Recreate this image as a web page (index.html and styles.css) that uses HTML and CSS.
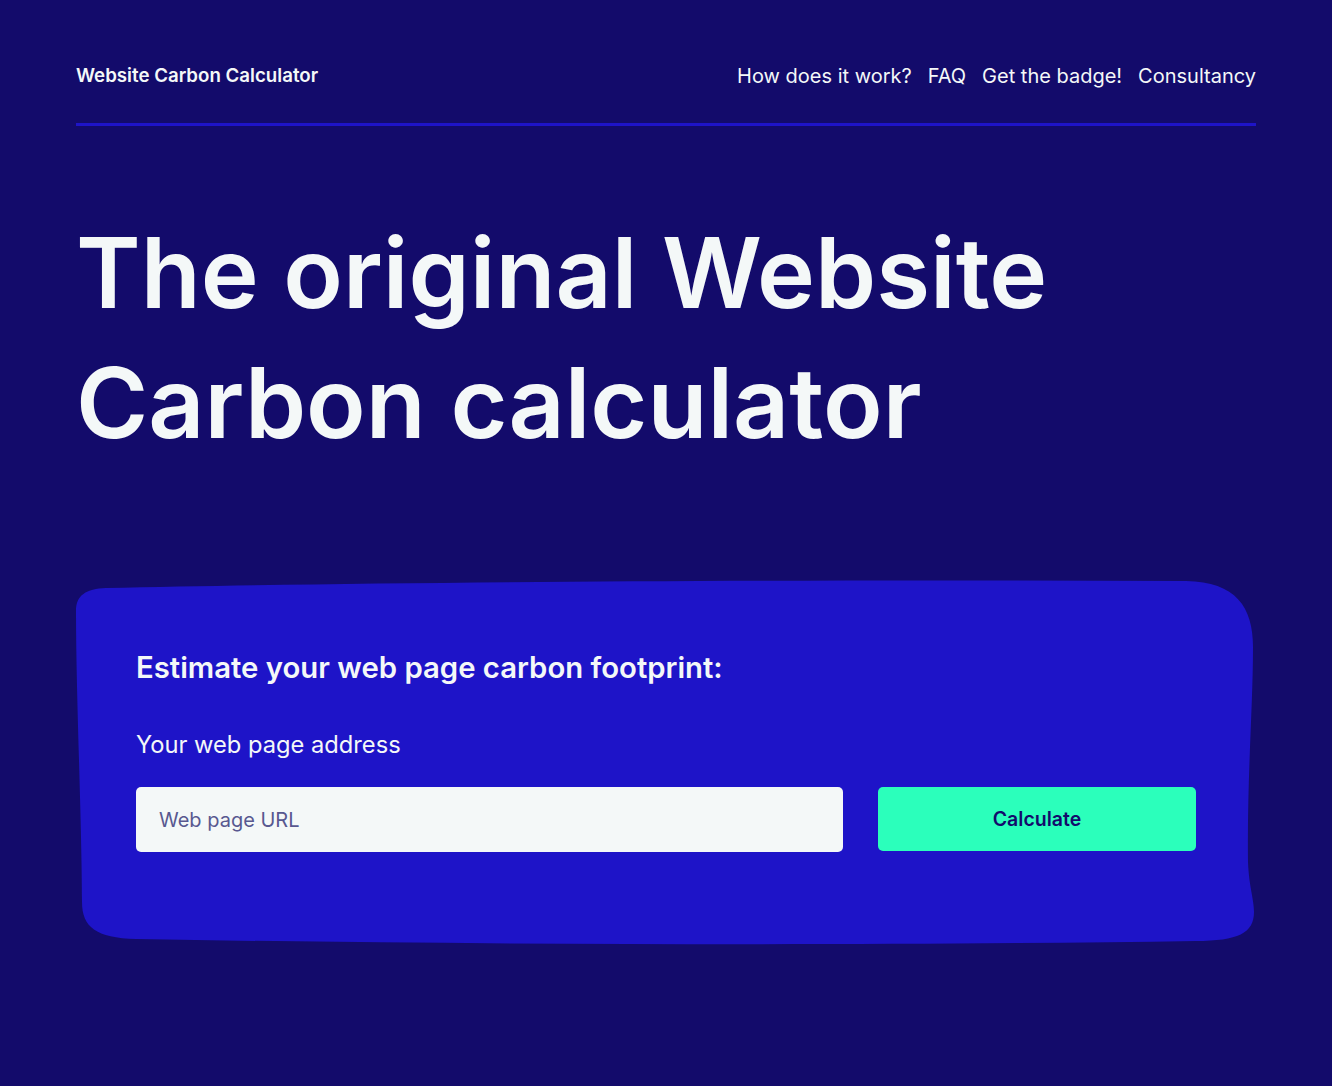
FILE: index.html
```html
<!DOCTYPE html>
<html lang="en">
<head>
<meta charset="utf-8">
<title>Website Carbon Calculator</title>
<link rel="stylesheet" href="styles.css">
</head>
<body>
<div class="page">
  <header class="site-header">
    <a class="brand" href="#">Website Carbon Calculator</a>
    <nav class="nav">
      <a href="#">How does it work?</a>
      <a href="#">FAQ</a>
      <a href="#">Get the badge!</a>
      <a href="#">Consultancy</a>
    </nav>
  </header>

  <h1 class="hero-title">The original Website<br>Carbon calculator</h1>

  <section class="card">
    <svg class="card-bg" viewBox="0 0 1180 370" preserveAspectRatio="none" aria-hidden="true">
      <path d="M0,34 C0,18 10,12 30,11 C300,5 700,2 1110,4 C1160,5 1177,30 1177,70 C1177,130 1171,200 1172,285 C1173,310 1178,322 1178,335 C1178,356 1162,364 1120,364 C800,369 400,368 60,362 C20,361 6,350 6,325 C6,250 0,120 0,34 Z" fill="#1e14c8"/>
    </svg>
    <h2 class="card-title">Estimate your web page carbon footprint:</h2>
    <label class="field-label" for="url">Your web page address</label>
    <div class="form-row">
      <input id="url" class="url-input" type="text" placeholder="Web page URL">
      <button class="calc-btn" type="button">Calculate</button>
    </div>
  </section>
</div>
</body>
</html>
```

FILE: styles.css
```css
html, body {
  margin: 0;
  padding: 0;
  background: #130b6b;
}

body {
  font-family: Inter, "Noto Sans", "Liberation Sans", sans-serif;
  color: #f4f8f8;
  min-height: 1086px;
}

.page {
  width: 1180px;
  margin: 0 auto;
}

.site-header {
  display: flex;
  justify-content: space-between;
  align-items: center;
  padding: 62px 0 34px;
  border-bottom: 3px solid #1e14c8;
}

.brand {
  color: #f4f8f8;
  text-decoration: none;
  font-size: 18.7px;
  font-weight: 600;
  line-height: 26px;
  padding-top: 1px;
}

.nav {
  display: flex;
  gap: 16px;
}

.nav a {
  color: #f4f8f8;
  text-decoration: none;
  font-size: 20px;
  line-height: 26px;
}

.hero-title {
  margin: 82px 0 0;
  font-size: 98px;
  line-height: 130px;
  font-weight: 600;
  letter-spacing: 0;
}

.card {
  position: relative;
  margin-top: 109px;
  padding: 73px 60px 95px;
  height: 370px;
  box-sizing: border-box;
}

.card-bg {
  position: absolute;
  left: 0;
  top: 0;
  width: 100%;
  height: 100%;
  z-index: 0;
}

.card > *:not(.card-bg) {
  position: relative;
  z-index: 1;
}

.card-title {
  margin: 0;
  font-size: 29.3px;
  line-height: 36px;
  font-weight: 600;
}

.field-label {
  display: block;
  margin-top: 44px;
  font-size: 23.7px;
  line-height: 30px;
}

.form-row {
  display: flex;
  gap: 35px;
  margin-top: 27px;
  align-items: flex-start;
}

.url-input {
  flex: 1;
  height: 65px;
  box-sizing: border-box;
  border: none;
  border-radius: 5px;
  background: #f4f8f8;
  padding: 0 23px;
  font-family: inherit;
  font-size: 20px;
  color: #130b6b;
  outline: none;
}

.url-input::placeholder {
  color: #585890;
}

.calc-btn {
  width: 318px;
  height: 64px;
  border: none;
  border-radius: 5px;
  background: #2bffbb;
  color: #130b6b;
  font-family: inherit;
  font-size: 19.5px;
  font-weight: 600;
  cursor: pointer;
}
```
